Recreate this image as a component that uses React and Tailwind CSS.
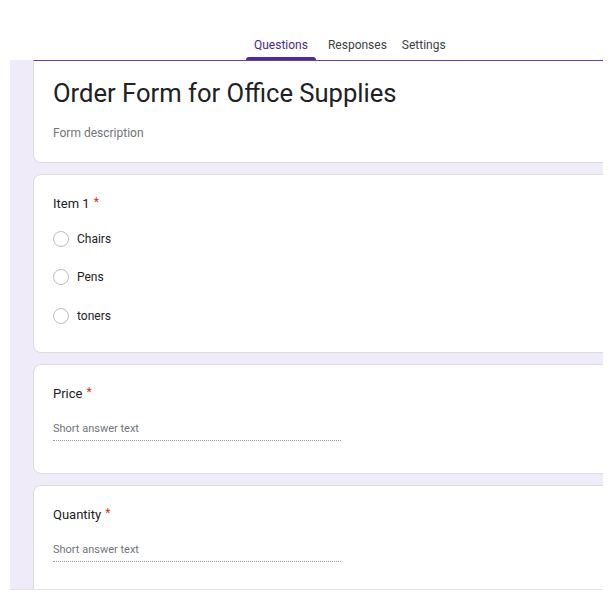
import React from 'react';

const Asterisk = () => <span className="relative -top-[2px] ml-[4px] text-[12px] text-[#d93025]">*</span>;

const Radio = ({ label }) => (
  <div className="flex h-[38.5px] items-center gap-2">
    <span className="h-4 w-4 rounded-full border-[1.5px] border-[#bdbdbd]" />
    <span className="text-[12px] leading-4 text-[#202124]">{label}</span>
  </div>
);

const ShortAnswer = ({ title }) => (
  <div className="w-[580px] rounded-l-lg border border-[#dadce0] bg-white pl-[19px] pt-[19px] pb-8">
    <div className="text-[13px] leading-5 text-[#202124]">
      {title}
      <Asterisk />
    </div>
    <div className="mt-[17px] w-[288px] border-b border-dotted border-[#9e9e9e] pb-[3px] text-[11px] leading-4 text-[#70757a]">
      Short answer text
    </div>
  </div>
);

const tabs = [
  { label: 'Questions', cls: 'px-2', active: true },
  { label: 'Responses', cls: 'ml-1 pl-2 pr-1' },
  { label: 'Settings', cls: 'ml-1 pl-[7px] pr-2' },
];

export default function App() {
  return (
    <div className="h-[601px] w-[613px] overflow-hidden bg-white font-['Roboto',sans-serif]">
      {/* Tabs */}
      <div className="flex h-[60px] items-end pl-[246px]">
        {tabs.map((t) => (
          <div key={t.label} className="flex flex-col">
            <span className={`${t.cls} text-[12px] leading-4 ${t.active ? 'text-[#4a2a87]' : 'text-[#3c4043]'}`}>{t.label}</span>
            <span className={`mt-1 h-[3px] rounded-t ${t.active ? 'bg-[#4e2c91]' : 'bg-transparent'}`} />
          </div>
        ))}
      </div>

      {/* Form body */}
      <div className="ml-[10px] flex h-[530px] w-[593px] flex-col gap-[11px] overflow-hidden border-b border-[#e3e3e3] bg-[#f0ebf8] pl-[23px]">
        <div className="w-[580px] rounded-bl-lg border border-t-[#673ab7] border-[#dadce0] bg-white pl-[19px] pt-4 pb-[20.5px]">
          <div className="text-[25.6px] leading-8 text-[#202124]">Order Form for Office Supplies</div>
          <div className="mt-4 text-[12px] leading-4 text-[#70757a]">Form description</div>
        </div>

        <div className="w-[580px] rounded-l-lg border border-[#dadce0] bg-white pl-[19px] pt-[19px] pb-[17px]">
          <div className="mb-[6px] text-[13px] leading-5 text-[#202124]">
            Item 1
            <Asterisk />
          </div>
          <Radio label="Chairs" />
          <Radio label="Pens" />
          <Radio label="toners" />
        </div>

        <ShortAnswer title="Price" />
        <ShortAnswer title="Quantity" />
      </div>
    </div>
  );
}
